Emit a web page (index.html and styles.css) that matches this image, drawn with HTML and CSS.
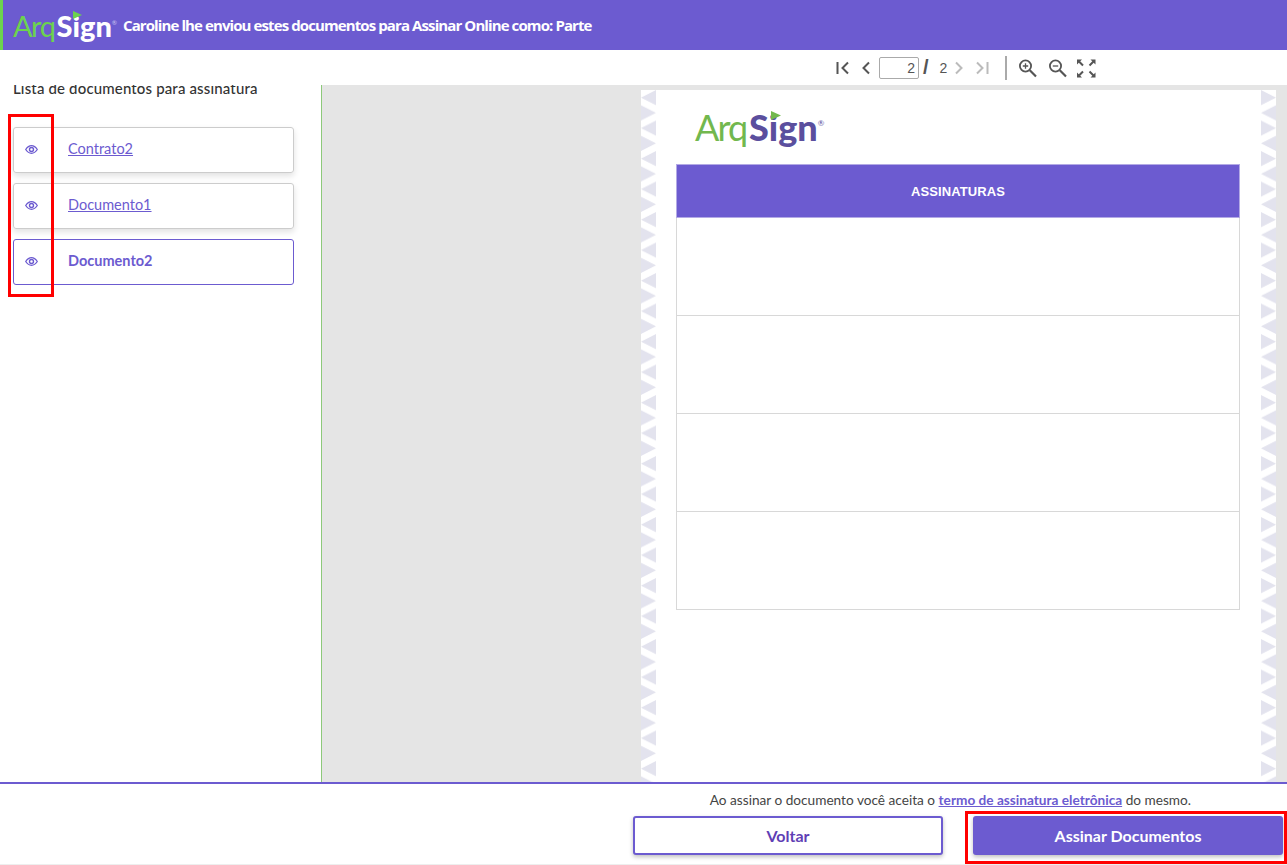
FILE: index.html
```html
<!DOCTYPE html>
<html lang="pt-BR">

<head>
    <meta charset="UTF-8">
    <title>ArqSign | Assinar Documentos</title>
    <link rel="stylesheet" href="styles.css">
</head>

<body>

    <svg class="defs" width="0" height="0">
        <symbol id="eye" viewBox="0 0 13 9">
            <path d="M.7 4.500C2.500 1.800 4.500.7 6.500.7s4 1.100 5.800 3.800c-1.800 2.700-3.800 3.800-5.800 3.800S2.500 7.200.7 4.500z" fill="none" stroke="currentColor" stroke-width="1.300" />
            <circle cx="6.500" cy="4.500" r="2" fill="none" stroke="currentColor" stroke-width="1.400" />
        </symbol>
        <pattern id="zig-left" width="15" height="30.5" patternUnits="userSpaceOnUse">
            <path d="M15 0V15.250L0 7.600zM0 15.250V30.500L15 22.900z" fill="#e3e3ee" />
        </pattern>
        <pattern id="zig-right" width="15" height="30.5" patternUnits="userSpaceOnUse">
            <path d="M0 0V15.250L15 7.600zM15 15.250V30.500L0 22.900z" fill="#e3e3ee" />
        </pattern>
    </svg>

    <header class="topbar">
        <div class="logo logo-light">
            <span class="logo-arq">Arq</span><span class="logo-sign">Sign</span><sup>®</sup>
            <svg class="logo-play" viewBox="0 0 9 8"><path d="M0 0 9 4 0 8z" /></svg>
        </div>
        <h1>Caroline lhe enviou estes documentos para Assinar Online como: Parte</h1>
    </header>

    <div class="toolbar">
        <svg class="tool" width="16" height="16" viewBox="0 0 16 16"><path d="M2.500 2v12M13 2.500 7.500 8l5.500 5.500" fill="none" stroke="#555" stroke-width="2" /></svg>
        <svg class="tool prev" width="12" height="16" viewBox="0 0 12 16"><path d="M9 2.500 3.500 8 9 13.500" fill="none" stroke="#555" stroke-width="2" /></svg>
        <input class="page-input" type="text" value="2">
        <span class="slash">/</span>
        <span class="page-total">2</span>
        <svg class="tool next" width="12" height="16" viewBox="0 0 12 16"><path d="M3 2.500 8.500 8 3 13.500" fill="none" stroke="#bbb" stroke-width="2" /></svg>
        <svg class="tool last" width="16" height="16" viewBox="0 0 16 16"><path d="M13.500 2v12M3 2.500 8.500 8 3 13.500" fill="none" stroke="#bbb" stroke-width="2" /></svg>
        <span class="divider"></span>
        <svg class="tool zoom" width="20" height="20" viewBox="0 0 20 20"><circle cx="7.500" cy="8" r="5.600" fill="none" stroke="#555" stroke-width="1.800" /><path d="M11.800 12.300 18 18.500" stroke="#555" stroke-width="2.200" /><path d="M4.800 8h5.400M7.500 5.300v5.400" stroke="#555" stroke-width="1.300" /></svg>
        <svg class="tool zoom" width="20" height="20" viewBox="0 0 20 20"><circle cx="7.500" cy="8" r="5.600" fill="none" stroke="#555" stroke-width="1.800" /><path d="M11.800 12.300 18 18.500" stroke="#555" stroke-width="2.200" /><path d="M4.800 8h5.400" stroke="#555" stroke-width="1.300" /></svg>
        <svg class="tool" width="20" height="20" viewBox="0 0 20 20"><path d="M1 1.500h5L1 6.500zM19.500 1.500h-5l5 5zM1 19.500h5l-5-5zM19.500 19.500h-5l5-5z" fill="#555" /><path d="M3 3.500l4 4M17.500 3.500l-4 4M3 17.500l4-4M17.500 17.500l-4-4" stroke="#555" stroke-width="2" /></svg>
    </div>

    <main class="content">
        <aside class="sidebar">
            <h2>Lista de documentos para assinatura</h2>
            <ul class="doc-list">
                <li class="doc-item">
                    <svg class="eye"><use href="#eye" /></svg>
                    <a href="#">Contrato2</a>
                </li>
                <li class="doc-item">
                    <svg class="eye"><use href="#eye" /></svg>
                    <a href="#">Documento1</a>
                </li>
                <li class="doc-item active">
                    <svg class="eye"><use href="#eye" /></svg>
                    <a href="#">Documento2</a>
                </li>
            </ul>
        </aside>

        <section class="viewer">
            <div class="page">
                <svg class="zigzag" width="15" height="692"><rect width="15" height="692" fill="url(#zig-left)" /></svg>
                <div class="page-body">
                    <div class="logo logo-dark">
                        <span class="logo-arq">Arq</span><span class="logo-sign">Sign</span><sup>®</sup>
                        <svg class="logo-play" viewBox="0 0 9 8"><path d="M0 0 9 4 0 8z" /></svg>
                    </div>
                    <table class="sign-table">
                        <tr><th>ASSINATURAS</th></tr>
                        <tr class="row-tall"><td></td></tr>
                        <tr class="row-tall"><td></td></tr>
                        <tr class="row-tall"><td></td></tr>
                        <tr class="row-last"><td></td></tr>
                    </table>
                </div>
                <svg class="zigzag" width="15" height="692"><rect width="15" height="692" fill="url(#zig-right)" /></svg>
            </div>
        </section>
    </main>

    <footer class="footer">
        <p>Ao assinar o documento você aceita o <a href="#">termo de assinatura eletrônica</a> do mesmo.</p>
        <div class="actions">
            <button class="btn btn-outline">Voltar</button>
            <button class="btn btn-primary">Assinar Documentos</button>
        </div>
    </footer>

    <div class="mark mark-eyes"></div>
    <div class="mark mark-sign"></div>

</body>

</html>
```

FILE: styles.css
```css
* {
    box-sizing: border-box;
}

html, body {
    height: 100%;
}

body {
    margin: 0;
    height: 865px;
    overflow: hidden;
    display: flex;
    flex-direction: column;
    font-family: "Lato", "Noto Sans", sans-serif;
    background-color: #fff;
    color: #333;
}

.defs {
    position: absolute;
}

.topbar {
    height: 50px;
    display: flex;
    align-items: center;
    gap: 10px;
    padding-left: 10px;
    background-color: #6c5bd0;
    border-left: 3px solid #6cd34e;
    flex: none;
}

.topbar h1 {
    margin: 0;
    font-family: "Open Sans", sans-serif;
    font-size: 15px;
    font-weight: 700;
    letter-spacing: -0.9px;
    color: #fff;
}

/* logo */
.logo {
    position: relative;
    flex: none;
    font-family: "Lato", sans-serif;
    line-height: 1;
    white-space: nowrap;
}

.logo sup {
    font-size: 0.22em;
    vertical-align: 1.9em;
    line-height: 0;
}

.logo-arq {
    font-weight: 400;
    letter-spacing: -0.05em;
    margin-right: 0.07em;
}

.logo-sign {
    font-weight: 900;
}

.logo-play {
    position: absolute;
}

.logo-light {
    width: 100px;
    font-size: 29px;
}

.logo-light .logo-arq {
    color: #6cd34e;
}

.logo-light .logo-sign {
    color: #fff;
}

.logo-light sup {
    color: #c9c3ee;
}

.logo-light .logo-play {
    left: 60px;
    top: 0;
    width: 9px;
    height: 8px;
    fill: #6cd34e;
}

.logo-dark {
    width: 130px;
    margin-left: 19px;
    height: 55px;
    font-size: 36px;
}

.logo-dark .logo-arq {
    color: #72b84e;
}

.logo-dark .logo-sign {
    color: #5b4f9e;
}

.logo-dark sup {
    color: #5b4f9e;
}

.logo-dark .logo-play {
    left: 76px;
    top: 2px;
    width: 10px;
    height: 9px;
    fill: #72b84e;
}

/* toolbar */
.toolbar {
    height: 35px;
    flex: none;
    display: flex;
    align-items: center;
    padding-left: 835px;
}

.tool {
    flex: none;
}

.prev {
    margin-left: 8.5px;
}

.page-input {
    width: 40px;
    height: 22px;
    margin-left: 7.5px;
    padding: 0 3px 0 0;
    border: 1px solid #aaa;
    border-radius: 2px;
    text-align: right;
    font-family: "Liberation Sans", sans-serif;
    font-size: 14px;
    color: #555;
}

.slash {
    margin-left: 4px;
    font-family: "Liberation Sans", sans-serif;
    font-size: 20px;
    font-weight: 700;
    color: #555;
}

.page-total {
    margin-left: 11px;
    font-family: "Liberation Sans", sans-serif;
    font-size: 14px;
    color: #555;
}

.next {
    margin-left: 5.5px;
}

.last {
    margin-left: 9px;
}

.divider {
    width: 2px;
    height: 24px;
    margin: 0 11px 0 15px;
    background-color: #aaa;
}

.zoom {
    margin-right: 10px;
}

.zoom + .zoom {
    margin-right: 8px;
}

/* main area */
.content {
    flex: 1;
    display: flex;
    min-height: 0;
}

.sidebar {
    width: 322px;
    flex: none;
    padding-left: 13px;
    overflow: hidden;
    border-right: 1px solid #8dc97a;
}

.sidebar h2 {
    margin: -5px 0 0;
    font-size: 15px;
    font-weight: 500;
    letter-spacing: 0.15px;
    line-height: 16px;
    color: #333;
}

.doc-list {
    list-style: none;
    margin: 31px 0 0;
    padding: 0;
    width: 281px;
}

.doc-item {
    height: 46px;
    margin-bottom: 10px;
    display: flex;
    align-items: center;
    padding-left: 11px;
    border: 1px solid #ccc;
    border-radius: 3px;
    box-shadow: 0 3px 6px rgba(0, 0, 0, 0.12);
    font-size: 14.5px;
}

.doc-item a {
    margin: 0 0 3px 30px;
    color: #6c5bd0;
}

.doc-item.active {
    border-color: #6c5bd0;
    box-shadow: none;
}

.doc-item.active a {
    font-weight: 700;
    text-decoration: none;
}

.eye {
    width: 13px;
    height: 9px;
    margin-bottom: 1px;
    color: #6c5bd0;
    flex: none;
}

.viewer {
    flex: 1;
    min-width: 0;
    overflow: hidden;
    background-color: #e5e5e5;
    padding: 5px 0 0 319px;
}

.page {
    width: 635px;
    height: 692px;
    display: flex;
    background-color: #fff;
}

.zigzag {
    flex: none;
}

.page-body {
    flex: 1;
    padding: 19px 21px 0 20px;
}

.sign-table {
    width: 564px;
    border-collapse: collapse;
    table-layout: fixed;
}

.sign-table th {
    height: 53px;
    background-color: #6c5bd0;
    border: 1px solid #b3aae5;
    font-family: "Liberation Sans", sans-serif;
    font-size: 13px;
    font-weight: 700;
    letter-spacing: 0.1px;
    color: #fff;
}

.sign-table td {
    border: 1px solid #d8d8d8;
}

.row-tall td {
    height: 98px;
}

.row-last td {
    height: 98px;
}

/* footer */
.footer {
    height: 83px;
    flex: none;
    border-top: 2px solid #6c5bd0;
    border-bottom: 1px solid #eee;
    background-color: #fff;
}

.footer p {
    margin: 9px 96px 0 0;
    text-align: right;
    font-size: 13.65px;
    line-height: 15px;
    color: #444;
}

.footer p a {
    font-weight: 700;
    color: #6c5bd0;
}

.actions {
    display: flex;
    justify-content: flex-end;
    gap: 30px;
    margin-top: 8px;
    padding-right: 4px;
}

.btn {
    height: 39px;
    border-radius: 3px;
    font-family: "Lato", sans-serif;
    font-size: 16px;
    font-weight: 700;
    box-shadow: 0 2px 4px rgba(0, 0, 0, 0.25);
    cursor: pointer;
}

.btn-outline {
    width: 310px;
    background-color: #fff;
    border: 2px solid #6c5bd0;
    color: #5f3fb5;
}

.btn-primary {
    width: 310px;
    background-color: #6c5bd0;
    border: none;
    color: #fff;
}

/* red highlights drawn over the page */
.mark {
    position: absolute;
    border: 3px solid #f00;
    pointer-events: none;
}

.mark-eyes {
    left: 8px;
    top: 114px;
    width: 46px;
    height: 183px;
}

.mark-sign {
    left: 965px;
    top: 811px;
    width: 322px;
    height: 53px;
}
```
